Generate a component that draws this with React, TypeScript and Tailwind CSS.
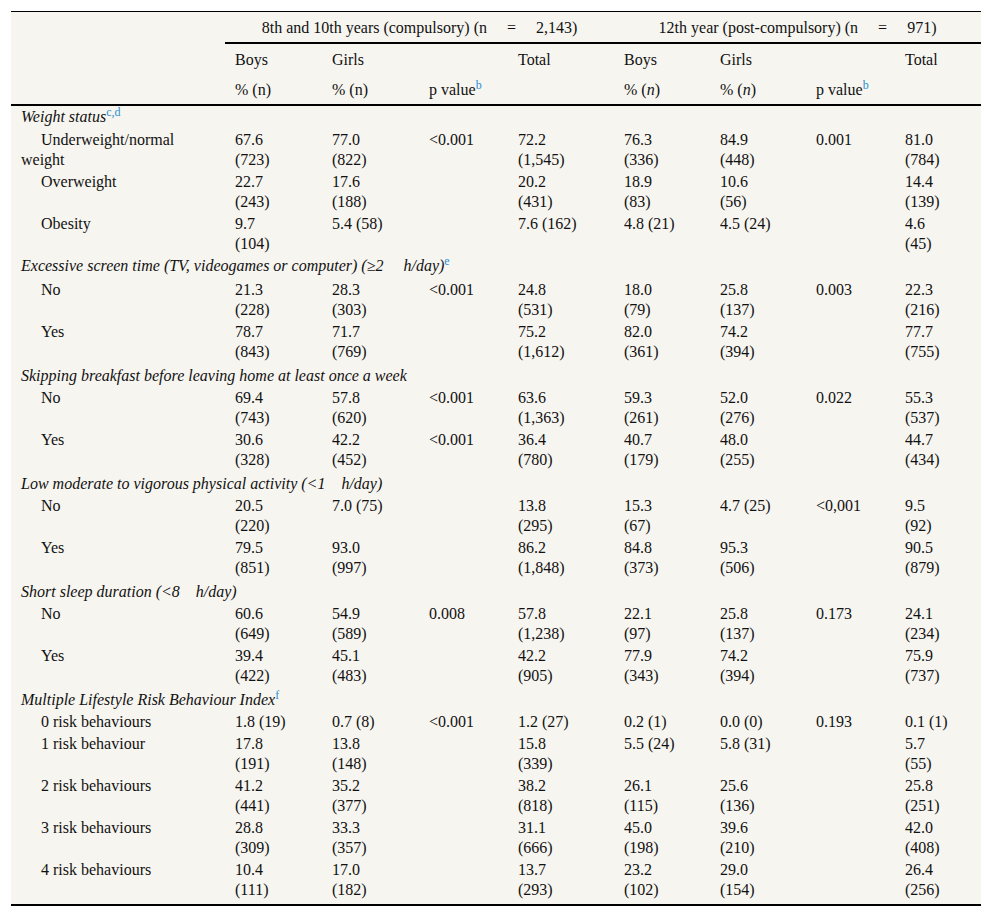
import React from "react";

type DataRow = { kind: "data"; label: string; cells: string[] };
type SectionRow = { kind: "section"; content: React.ReactNode; pad: string };
type Row = DataRow | SectionRow;

const Sup = ({ children }: { children: React.ReactNode }) => (
  <span className="relative -top-[6px] text-[12px] leading-none not-italic text-[#2b8fd6]">{children}</span>
);

const rows: Row[] = [
  { kind: "section", content: <>Weight status<Sup>c,d</Sup></>, pad: "pt-[1px] pb-[1px]" },
  { kind: "data", label: "Underweight/normal weight", cells: ["67.6 (723)", "77.0 (822)", "<0.001", "72.2 (1,545)", "76.3 (336)", "84.9 (448)", "0.001", "81.0 (784)"] },
  { kind: "data", label: "Overweight", cells: ["22.7 (243)", "17.6 (188)", "", "20.2 (431)", "18.9 (83)", "10.6 (56)", "", "14.4 (139)"] },
  { kind: "data", label: "Obesity", cells: ["9.7 (104)", "5.4 (58)", "", "7.6 (162)", "4.8 (21)", "4.5 (24)", "", "4.6 (45)"] },
  {
    kind: "section",
    content: <>Excessive screen time (TV, videogames or computer) (≥2{"\u2003 "}h/day)<Sup>e</Sup></>,
    pad: "pt-[2px] pb-[2px]",
  },
  { kind: "data", label: "No", cells: ["21.3 (228)", "28.3 (303)", "<0.001", "24.8 (531)", "18.0 (79)", "25.8 (137)", "0.003", "22.3 (216)"] },
  { kind: "data", label: "Yes", cells: ["78.7 (843)", "71.7 (769)", "", "75.2 (1,612)", "82.0 (361)", "74.2 (394)", "", "77.7 (755)"] },
  { kind: "section", content: <>Skipping breakfast before leaving home at least once a week</>, pad: "pt-[4px] pb-0" },
  { kind: "data", label: "No", cells: ["69.4 (743)", "57.8 (620)", "<0.001", "63.6 (1,363)", "59.3 (261)", "52.0 (276)", "0.022", "55.3 (537)"] },
  { kind: "data", label: "Yes", cells: ["30.6 (328)", "42.2 (452)", "<0.001", "36.4 (780)", "40.7 (179)", "48.0 (255)", "", "44.7 (434)"] },
  { kind: "section", content: <>Low moderate to vigorous physical activity (&lt;1{"\u2003"}h/day)</>, pad: "pt-[4px] pb-0" },
  { kind: "data", label: "No", cells: ["20.5 (220)", "7.0 (75)", "", "13.8 (295)", "15.3 (67)", "4.7 (25)", "<0,001", "9.5 (92)"] },
  { kind: "data", label: "Yes", cells: ["79.5 (851)", "93.0 (997)", "", "86.2 (1,848)", "84.8 (373)", "95.3 (506)", "", "90.5 (879)"] },
  { kind: "section", content: <>Short sleep duration (&lt;8{"\u2003"}h/day)</>, pad: "pt-[4px] pb-0" },
  { kind: "data", label: "No", cells: ["60.6 (649)", "54.9 (589)", "0.008", "57.8 (1,238)", "22.1 (97)", "25.8 (137)", "0.173", "24.1 (234)"] },
  { kind: "data", label: "Yes", cells: ["39.4 (422)", "45.1 (483)", "", "42.2 (905)", "77.9 (343)", "74.2 (394)", "", "75.9 (737)"] },
  { kind: "section", content: <>Multiple Lifestyle Risk Behaviour Index<Sup>f</Sup></>, pad: "pt-[4px] pb-0" },
  { kind: "data", label: "0 risk behaviours", cells: ["1.8 (19)", "0.7 (8)", "<0.001", "1.2 (27)", "0.2 (1)", "0.0 (0)", "0.193", "0.1 (1)"] },
  { kind: "data", label: "1 risk behaviour", cells: ["17.8 (191)", "13.8 (148)", "", "15.8 (339)", "5.5 (24)", "5.8 (31)", "", "5.7 (55)"] },
  { kind: "data", label: "2 risk behaviours", cells: ["41.2 (441)", "35.2 (377)", "", "38.2 (818)", "26.1 (115)", "25.6 (136)", "", "25.8 (251)"] },
  { kind: "data", label: "3 risk behaviours", cells: ["28.8 (309)", "33.3 (357)", "", "31.1 (666)", "45.0 (198)", "39.6 (210)", "", "42.0 (408)"] },
  { kind: "data", label: "4 risk behaviours", cells: ["10.4 (111)", "17.0 (182)", "", "13.7 (293)", "23.2 (102)", "29.0 (154)", "", "26.4 (256)"] },
];

const cellWidths = ["w-[54px]", "w-[54px]", "w-[54px]", "w-[62px]", "w-[54px]", "w-[54px]", "w-[54px]", "w-[46px]"];

const H2 = ({ children }: { children?: React.ReactNode }) => (
  <th className="p-0 pl-[10px] pt-[6px] pb-[4px] text-left align-top font-normal">{children}</th>
);
const H3 = ({ children }: { children?: React.ReactNode }) => (
  <th className="p-0 pl-[10px] pt-[6px] pb-[4px] text-left align-top font-normal border-b-2 border-black">{children}</th>
);

export default function App() {
  return (
    <div className="min-h-screen bg-white pt-[11px] pl-[11px] font-['Liberation_Serif','Times_New_Roman',serif] text-[16px] leading-[20px] text-[#111]">
      <div className="w-[970px] bg-[#f7f5f0] border-t border-black border-b-2 pb-[4px]">
        <table className="w-[970px] table-fixed border-separate border-spacing-0">
          <colgroup>
            <col className="w-[214px]" />
            <col className="w-[97px]" />
            <col className="w-[97px]" />
            <col className="w-[89px]" />
            <col className="w-[106px]" />
            <col className="w-[96px]" />
            <col className="w-[96px]" />
            <col className="w-[89px]" />
            <col className="w-[86px]" />
          </colgroup>
          <thead>
            <tr>
              <th rowSpan={3} className="p-0 border-b-2 border-black" />
              <th colSpan={4} className="p-0 pt-[6px] pb-[4px] text-center font-normal border-b-2 border-black">
                8th and 10th years (compulsory) (n{"\u2003 "}={" \u2003"}2,143)
              </th>
              <th colSpan={4} className="p-0 pt-[6px] pb-[4px] text-center font-normal border-b-2 border-black">
                12th year (post-compulsory) (n{"\u2003 "}={" \u2003"}971)
              </th>
            </tr>
            <tr>
              <H2>Boys</H2>
              <H2>Girls</H2>
              <H2 />
              <H2>Total</H2>
              <H2>Boys</H2>
              <H2>Girls</H2>
              <H2 />
              <H2>Total</H2>
            </tr>
            <tr>
              <H3>% (n)</H3>
              <H3>% (n)</H3>
              <H3>
                p value<Sup>b</Sup>
              </H3>
              <H3 />
              <H3>
                % (<i>n</i>)
              </H3>
              <H3>
                % (<i>n</i>)
              </H3>
              <H3>
                p value<Sup>b</Sup>
              </H3>
              <H3 />
            </tr>
          </thead>
          <tbody>
            {rows.map((r, i) =>
              r.kind === "section" ? (
                <tr key={i}>
                  <td colSpan={9} className={`p-0 pl-[10px] ${r.pad} italic align-top`}>
                    {r.content}
                  </td>
                </tr>
              ) : (
                <tr key={i}>
                  <td className="p-0 pl-[10px] pr-[14px] pt-[2px] pb-0 align-top indent-5">{r.label}</td>
                  {r.cells.map((c, j) => (
                    <td key={j} className="p-0 pl-[10px] pt-[2px] pb-0 align-top">
                      <div className={cellWidths[j]}>{c}</div>
                    </td>
                  ))}
                </tr>
              )
            )}
          </tbody>
        </table>
      </div>
    </div>
  );
}
